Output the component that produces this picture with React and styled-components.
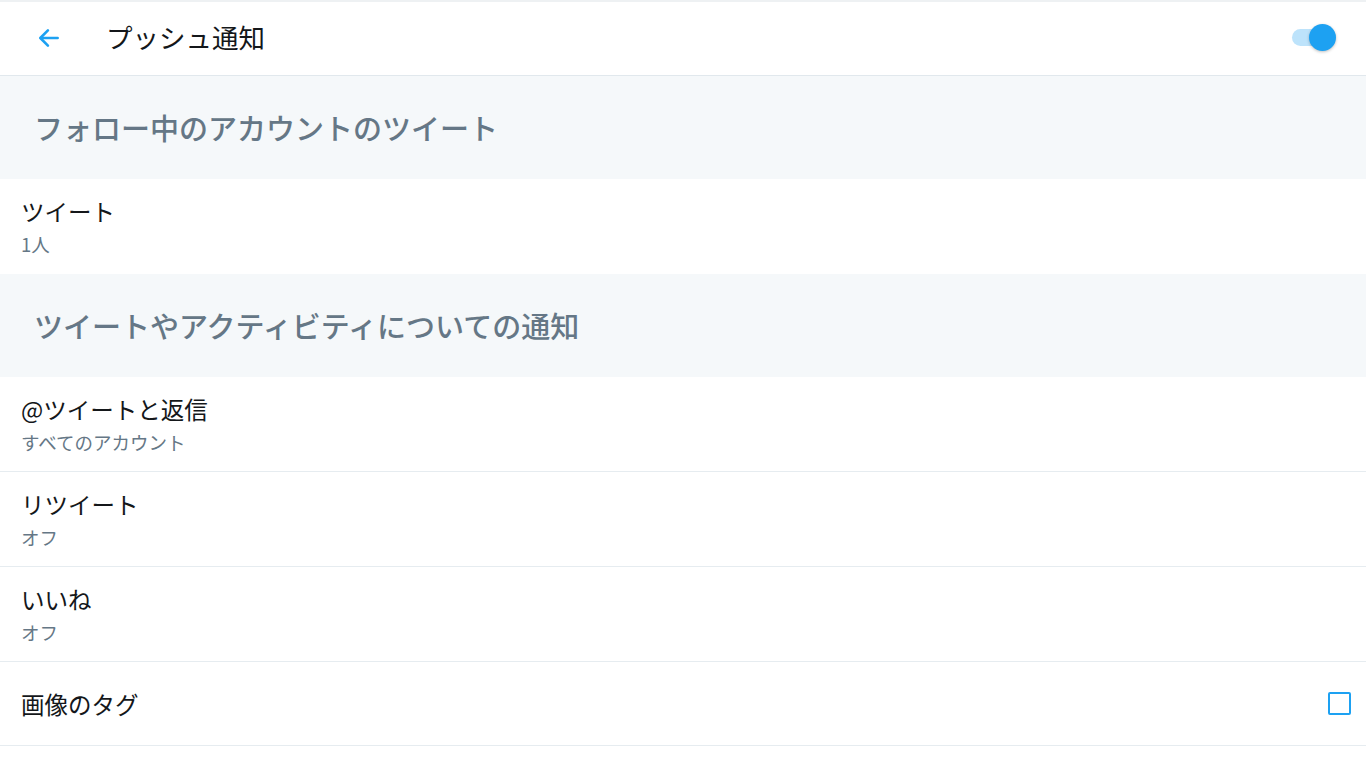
import React from "react";
import styled, { createGlobalStyle } from "styled-components";

const GlobalStyle = createGlobalStyle`
  html, body {
    margin: 0;
    padding: 0;
    background: #ffffff;
    font-family: "Noto Sans CJK JP", "Noto Sans", sans-serif;
  }
`;

const Page = styled.div`
  width: 1366px;
  min-height: 768px;
  background: #ffffff;
  border-top: 2px solid #eef1f3;
  box-sizing: border-box;
`;

const Header = styled.div`
  display: flex;
  align-items: center;
  height: 73px;
  padding: 0 30px 0 34px;
  border-bottom: 1px solid #e1e8ed;
`;

const BackButton = styled.div`
  width: 30px;
  height: 30px;
  display: flex;
  align-items: center;
  justify-content: center;
  color: #1da1f2;
  margin-bottom: 2px;
`;

const HeaderTitle = styled.div`
  margin-left: 42px;
  font-size: 26.5px;
  line-height: 34px;
  color: #14171a;
  flex: 1;
  margin-bottom: 4px;
`;

const Toggle = styled.div`
  position: relative;
  width: 44px;
  height: 28px;
  display: flex;
  align-items: center;
  margin-bottom: 2px;
`;

const Track = styled.div`
  width: 40px;
  height: 17px;
  border-radius: 9px;
  background: #bde3fb;
`;

const Thumb = styled.div`
  position: absolute;
  right: 0;
  top: 0;
  width: 27px;
  height: 27px;
  border-radius: 50%;
  background: #1da1f2;
  box-shadow: 0 1px 3px rgba(0, 0, 0, 0.25);
`;

const SectionHeader = styled.div`
  height: 103px;
  display: flex;
  align-items: center;
  padding-left: 34px;
  background: #f5f8fa;
  font-size: 29px;
  font-weight: 500;
  color: #657786;
  padding-bottom: 2px;
  box-sizing: border-box;
`;

const Row = styled.div`
  display: flex;
  align-items: center;
  height: ${({ tall }) => (tall ? "95px" : "84px")};
  padding: 0 14px 0 21px;
  border-bottom: ${({ divider }) => (divider ? "1px solid #e6ecf0" : "none")};
  box-sizing: border-box;
`;

const RowText = styled.div`
  flex: 1;
  display: flex;
  flex-direction: column;
`;

const RowTitle = styled.div`
  font-size: 23.5px;
  color: #14171a;
  line-height: 30px;
`;

const RowSub = styled.div`
  font-size: 18.5px;
  color: #657786;
  line-height: 26px;
  margin-top: 5px;
`;

const Checkbox = styled.div`
  width: 19px;
  height: 19px;
  border: 2.5px solid #1da1f2;
  border-radius: 2px;
  margin-right: 1px;
`;

const ArrowLeft = () => (
  <svg width="26" height="26" viewBox="0 0 24 24" fill="none" stroke="currentColor" strokeWidth="2.4" strokeLinecap="round" strokeLinejoin="round">
    <path d="M20 12H4.5" />
    <path d="M11 5l-7 7 7 7" />
  </svg>
);

const rows1 = [{ title: "ツイート", sub: "1人" }];
const rows2 = [
  { title: "@ツイートと返信", sub: "すべてのアカウント" },
  { title: "リツイート", sub: "オフ" },
  { title: "いいね", sub: "オフ" },
];

const App = () => {
  return (
    <Page>
      <GlobalStyle />
      <Header>
        <BackButton>
          <ArrowLeft />
        </BackButton>
        <HeaderTitle>プッシュ通知</HeaderTitle>
        <Toggle>
          <Track />
          <Thumb />
        </Toggle>
      </Header>
      <SectionHeader>フォロー中のアカウントのツイート</SectionHeader>
      {rows1.map((r) => (
        <Row tall key={r.title}>
          <RowText>
            <RowTitle>{r.title}</RowTitle>
            <RowSub>{r.sub}</RowSub>
          </RowText>
        </Row>
      ))}
      <SectionHeader>ツイートやアクティビティについての通知</SectionHeader>
      {rows2.map((r) => (
        <Row tall divider key={r.title}>
          <RowText>
            <RowTitle>{r.title}</RowTitle>
            <RowSub>{r.sub}</RowSub>
          </RowText>
        </Row>
      ))}
      <Row divider>
        <RowText>
          <RowTitle>画像のタグ</RowTitle>
        </RowText>
        <Checkbox />
      </Row>
    </Page>
  );
};

export default App;
